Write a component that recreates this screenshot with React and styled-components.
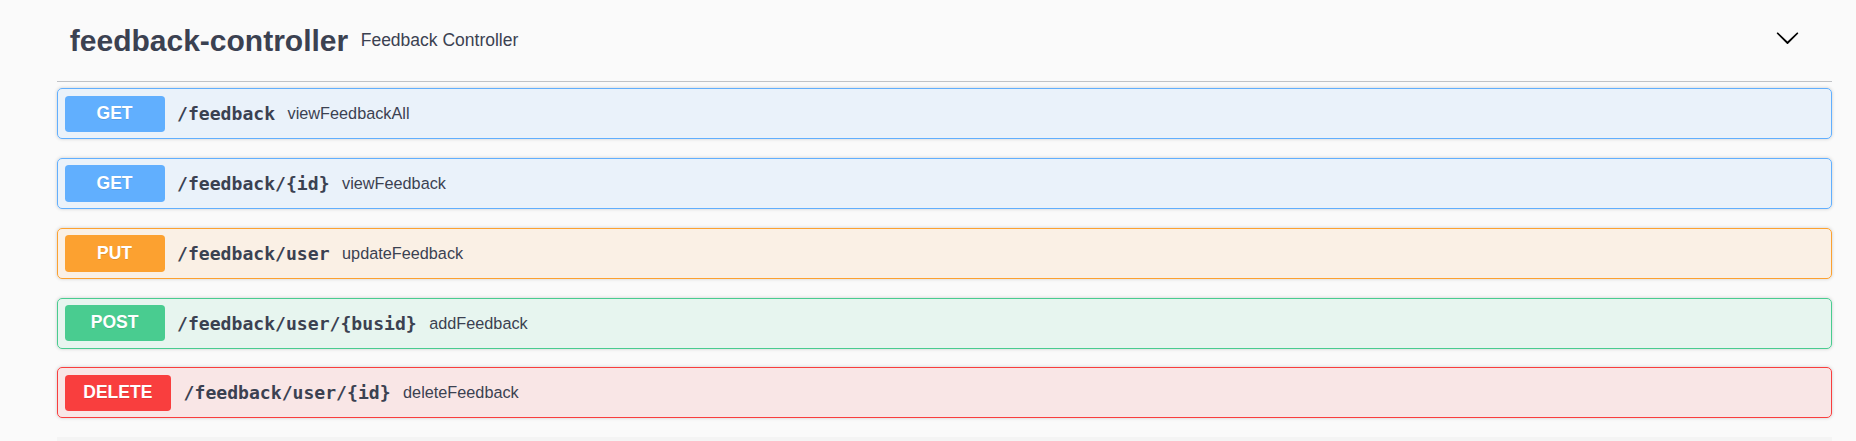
import React from "react";
import styled, { createGlobalStyle } from "styled-components";

const Global = createGlobalStyle`
  html, body { margin: 0; padding: 0; background: #fafafa; }
  body { font-family: "Liberation Sans", Arial, sans-serif; color: #3b4151; }
`;

const METHODS = {
  GET: { c: "97,175,254", hex: "#61affe" },
  PUT: { c: "252,161,48", hex: "#fca130" },
  POST: { c: "73,204,144", hex: "#49cc90" },
  DELETE: { c: "249,62,62", hex: "#f93e3e" },
};

const Page = styled.div`
  padding: 0 24px 0 57.3px;
  height: 441px;
  overflow: hidden;
`;

const Tag = styled.div`
  display: flex;
  align-items: center;
  box-sizing: border-box;
  height: 82px;
  padding: 12.5px 25px 12.5px 12.5px;
  border-bottom: 1px solid rgba(59, 65, 81, 0.3);
  margin-bottom: 6.25px;
`;

const TagTitle = styled.span`
  font-family: "Liberation Sans", Arial, sans-serif;
  font-size: 30px;
  font-weight: 700;
  color: #3b4151;
`;

const TagSmall = styled.small`
  flex: 1;
  font-family: "Liberation Sans", Arial, sans-serif;
  font-size: 17.5px;
  font-weight: 400;
  padding: 0 12.5px;
  color: #3b4151;
`;

const ExpandButton = styled.button`
  border: none;
  background: none;
  padding: 0 7.2px;
  margin: 0 0 6px;
  display: flex;
  align-items: center;
  cursor: pointer;
`;

const Block = styled.div`
  display: flex;
  align-items: center;
  box-sizing: border-box;
  height: 51px;
  padding: 6.25px;
  margin-bottom: 18.75px;
  border: 1px solid ${(p) => METHODS[p.$m].hex};
  border-radius: 5px;
  background: rgba(${(p) => METHODS[p.$m].c}, 0.1);
  box-shadow: 0 0 3.75px rgba(0, 0, 0, 0.19);
`;

const Method = styled.span`
  box-sizing: border-box;
  min-width: 100px;
  padding: 7.5px 18.75px;
  border-radius: 3.75px;
  background: ${(p) => METHODS[p.$m].hex};
  color: #fff;
  font-family: "Liberation Sans", Arial, sans-serif;
  font-size: 17.5px;
  font-weight: 700;
  line-height: 21.5px;
  text-align: center;
  text-shadow: 0 1px 0 rgba(0, 0, 0, 0.1);
`;

const Path = styled.span`
  padding: 0 12.5px;
  font-family: "DejaVu Sans Mono", "Liberation Mono", monospace;
  font-size: 18.1px;
  font-weight: 700;
  color: #3b4151;
`;

const Desc = styled.span`
  flex: 1 1 auto;
  font-family: "Liberation Sans", Arial, sans-serif;
  font-size: 16.25px;
  color: #3b4151;
`;

const NextStrip = styled.div`
  height: 20px;
  background: #f4f4f4;
`;

const ops = [
  { m: "GET", path: "/feedback", desc: "viewFeedbackAll" },
  { m: "GET", path: "/feedback/{id}", desc: "viewFeedback" },
  { m: "PUT", path: "/feedback/user", desc: "updateFeedback" },
  { m: "POST", path: "/feedback/user/{busid}", desc: "addFeedback" },
  { m: "DELETE", path: "/feedback/user/{id}", desc: "deleteFeedback" },
];

export default function App() {
  return (
    <>
      <Global />
      <Page>
        <Tag>
          <TagTitle>feedback-controller</TagTitle>
          <TagSmall>Feedback Controller</TagSmall>
          <ExpandButton aria-label="collapse">
            <svg width="25" height="25" viewBox="0 0 20 20">
              <path
                fill="#000"
                d="M17.418 6.109c.272-.268.709-.268.979 0s.271.701 0 .969l-7.908 7.83c-.27.268-.707.268-.979 0l-7.908-7.83c-.27-.268-.27-.701 0-.969.271-.268.709-.268.979 0L10 13.25l7.418-7.141z"
              />
            </svg>
          </ExpandButton>
        </Tag>
        {ops.map((o, i) => (
          <Block key={i} $m={o.m}>
            <Method $m={o.m}>{o.m}</Method>
            <Path>{o.path}</Path>
            <Desc>{o.desc}</Desc>
          </Block>
        ))}
        <NextStrip />
      </Page>
    </>
  );
}
